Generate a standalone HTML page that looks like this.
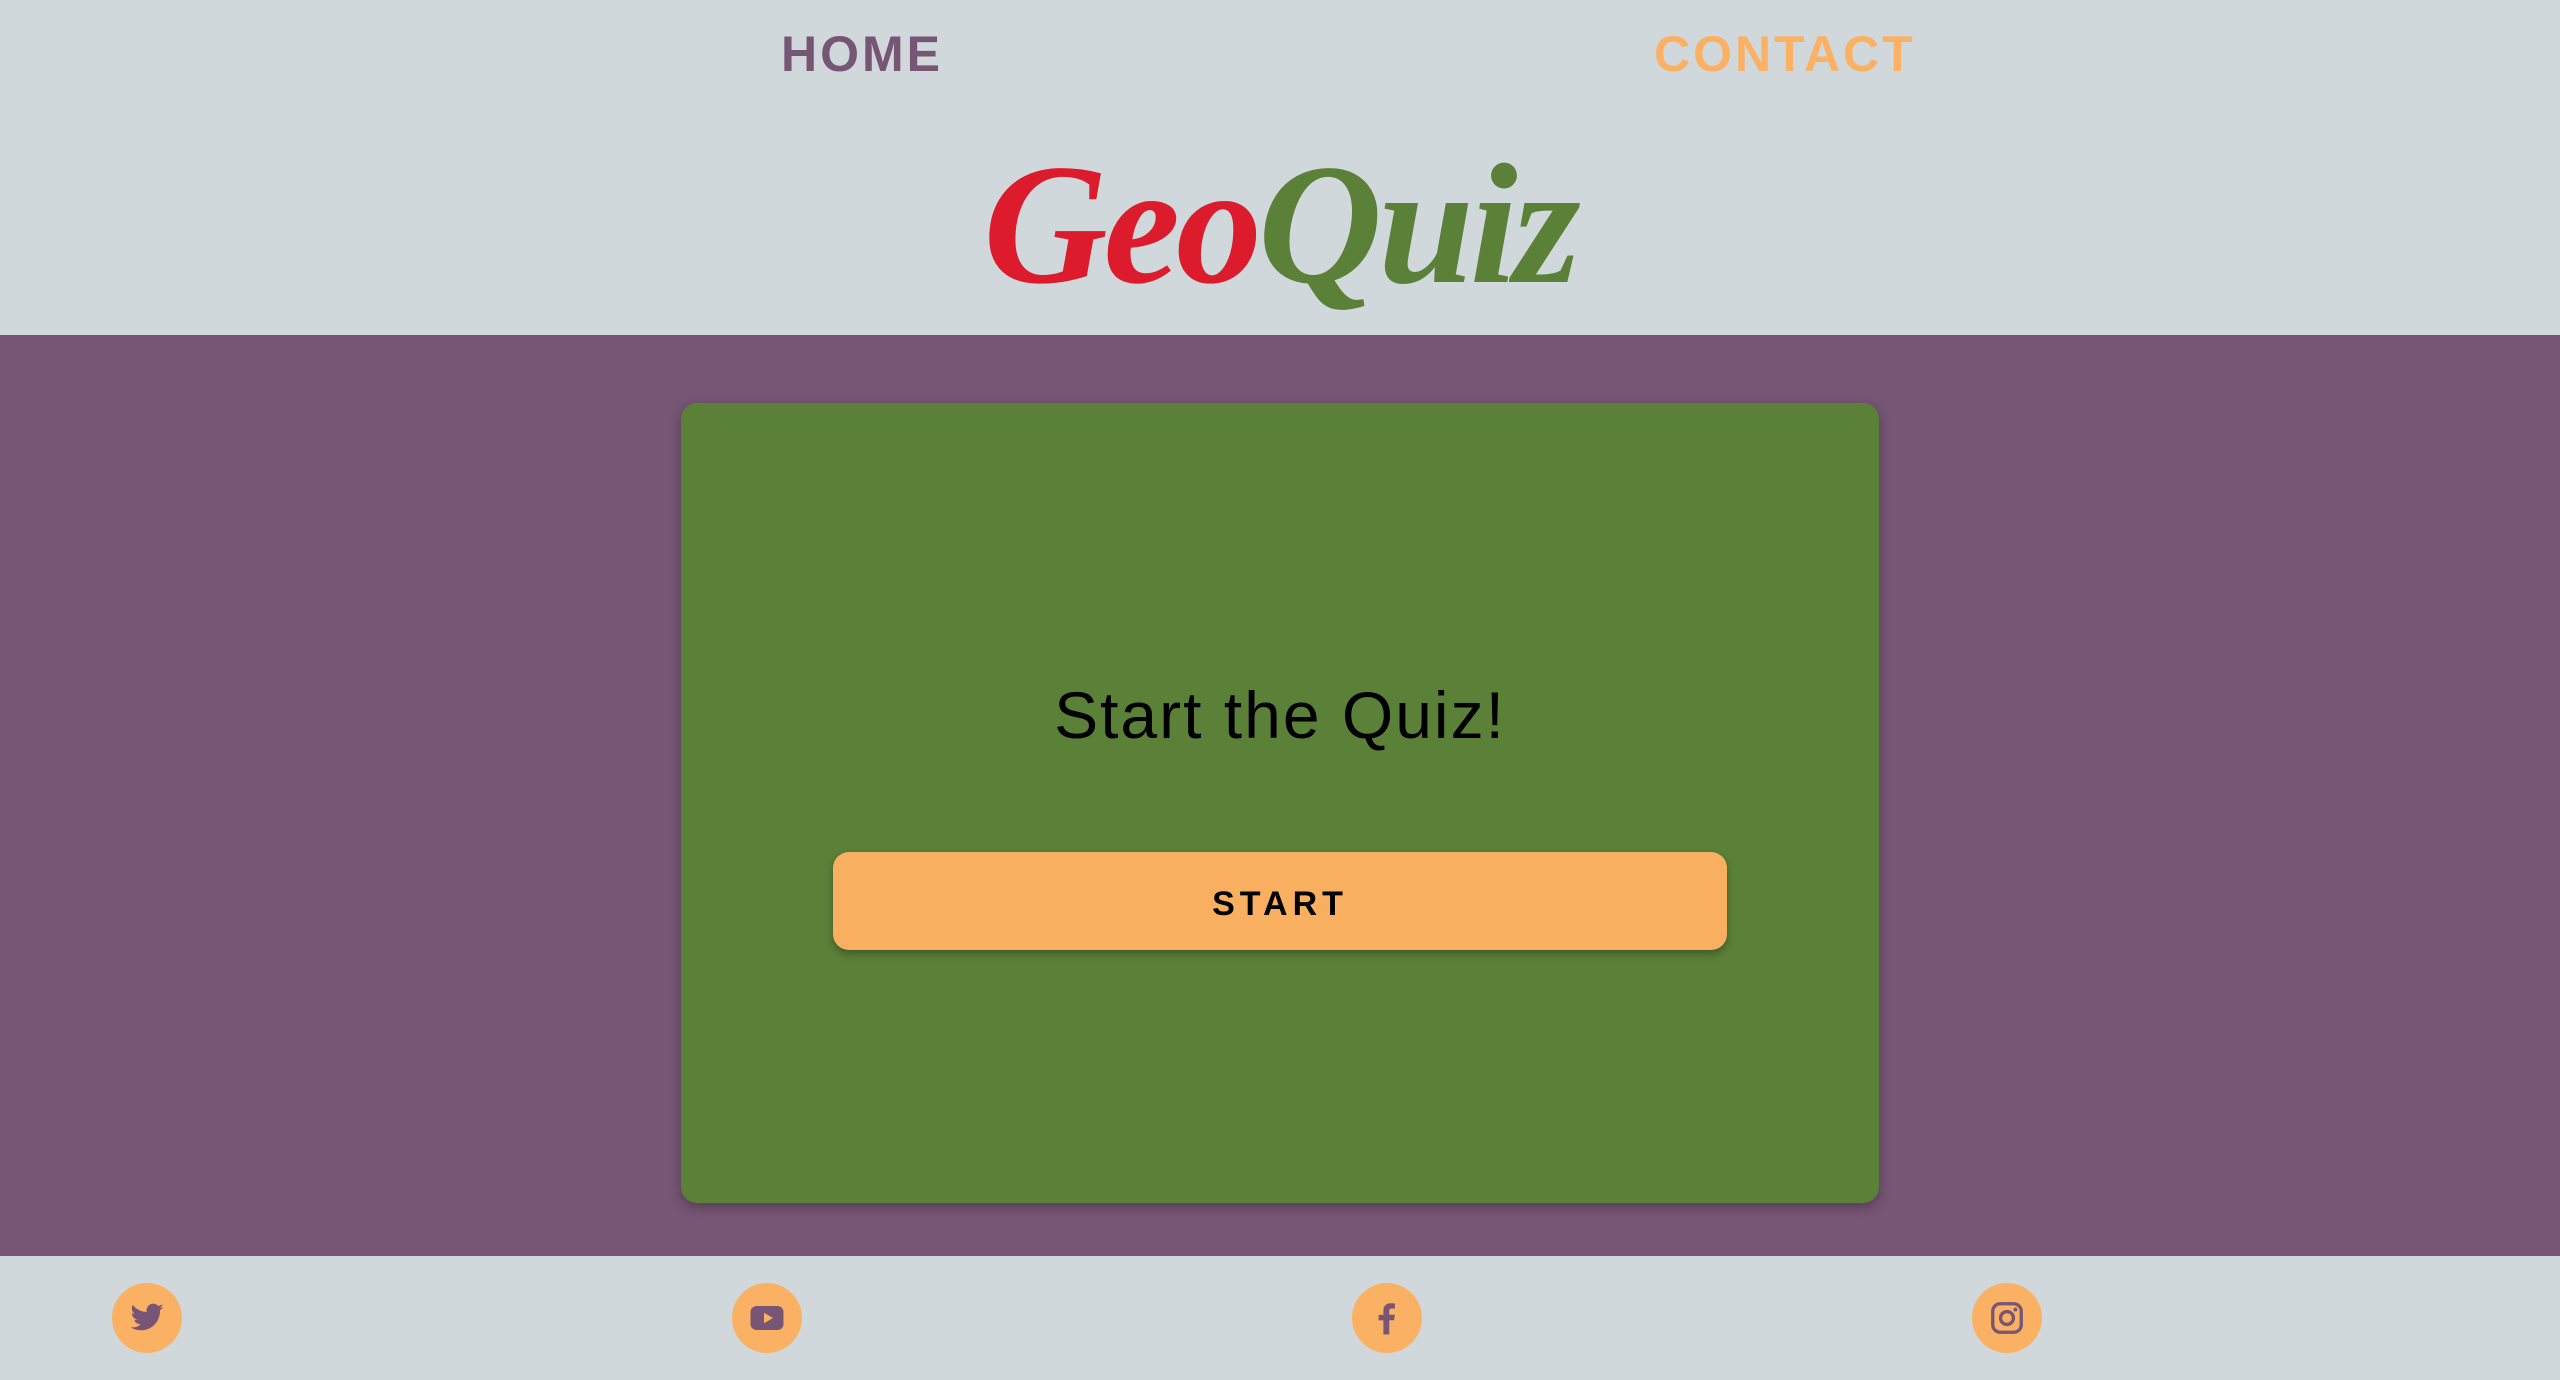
<!DOCTYPE html>
<html><head><meta charset="utf-8"><style>
*{margin:0;padding:0;box-sizing:border-box}
html,body{width:2560px;height:1380px;overflow:hidden;background:#d0d8db;font-family:"Liberation Sans",sans-serif}
header{position:absolute;left:0;top:0;width:2560px;height:335px;background:#d0d8db}
.nav{position:absolute;top:24px;font-size:50px;letter-spacing:3px;font-weight:bold;line-height:60px}
.logo{position:absolute;left:0;width:2560px;top:130px;text-align:center;font-size:172px;font-weight:bold;font-style:italic;line-height:190px;letter-spacing:-4px;font-family:"Liberation Serif",serif}
main{position:absolute;left:0;top:335px;width:2560px;height:921px;background:#775675}
.card{position:absolute;left:681px;top:68px;width:1198px;height:800px;background:#5b8038;border-radius:16px;box-shadow:0 4px 12px rgba(0,0,0,.3)}
.title{position:absolute;left:0;width:100%;top:272px;text-align:center;font-size:66px;line-height:80px;color:#000;letter-spacing:2px}
.btn{position:absolute;left:152px;top:449px;width:894px;height:98px;background:#f8b060;border-radius:16px;box-shadow:0 4px 8px rgba(0,0,0,.3);text-align:center;font-size:34px;font-weight:bold;letter-spacing:5px;line-height:104px;color:#000}
footer{position:absolute;left:0;top:1256px;width:2560px;height:124px;background:#d0d8db}
.ic{position:absolute;top:27px;width:70px;height:70px;border-radius:50%;background:#fbb163}
.ic svg{position:absolute;left:17px;top:17px;width:36px;height:36px}
</style></head><body>
<header>
<div class="nav" style="left:781px;color:#775675">HOME</div>
<div class="nav" style="left:1654px;color:#fbb163">CONTACT</div>
<div class="logo"><span style="color:#dc1c2c">Geo</span><span style="color:#5b8038">Quiz</span></div>
</header>
<main>
<div class="card">
<div class="title">Start the Quiz!</div>
<div class="btn">START</div>
</div>
</main>
<footer>
<div class="ic" style="left:112px"><svg viewBox="0 0 24 24"><path fill="#775675" d="M23 4.6c-.8.4-1.7.6-2.6.7.9-.6 1.6-1.4 2-2.5-.9.5-1.9.9-2.9 1.1A4.5 4.5 0 0 0 11.8 8 12.8 12.8 0 0 1 2.5 3.3a4.5 4.5 0 0 0 1.4 6c-.7 0-1.4-.2-2-.6 0 2.200 1.500 4 3.600 4.400-.7.2-1.400.2-2 .1.6 1.8 2.200 3.100 4.200 3.100A9 9 0 0 1 1 18.200 12.800 12.800 0 0 0 7.900 20.200c8.300 0 12.800-6.900 12.800-12.800v-.6c.9-.6 1.600-1.400 2.300-2.200z"/></svg></div>
<div class="ic" style="left:732px"><svg viewBox="0 0 24 24"><rect x="1" y="4" width="22" height="16" rx="4" fill="#775675"/><path d="M10 8.5v7l6-3.5z" fill="#fbb163"/></svg></div>
<div class="ic" style="left:1352px"><svg viewBox="0 0 24 24"><path fill="#775675" d="M13.500 23v-9.500h3.200l.5-3.700h-3.700V7.500c0-1.100.3-1.800 1.800-1.800h2V2.400c-.4 0-1.500-.2-2.900-.2-2.900 0-4.800 1.700-4.800 5v2.700H6.400v3.700h3.200V23z"/></svg></div>
<div class="ic" style="left:1972px"><svg viewBox="0 0 24 24"><rect x="2.500" y="2.500" width="19" height="19" rx="5" fill="none" stroke="#775675" stroke-width="2.200"/><circle cx="12" cy="12" r="4.300" fill="none" stroke="#775675" stroke-width="2.200"/><circle cx="17.600" cy="6.400" r="1.300" fill="#775675"/></svg></div>
</footer>
</body></html>
